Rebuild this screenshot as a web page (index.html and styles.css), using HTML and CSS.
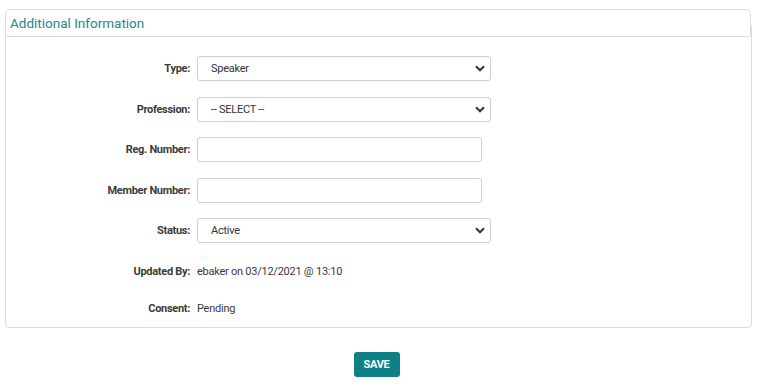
FILE: index.html
```html
<!DOCTYPE html>
<html>
<head>
<meta charset="utf-8">
<link rel="stylesheet" href="styles.css">
</head>
<body>
<div class="panel">
  <div class="panel-head">Additional Information</div>
  <div class="panel-body">
    <form class="form">
      <div class="row">
        <label class="lbl">Type:</label>
        <div class="sel"><span class="val">Speaker</span>
          <svg class="chev" width="10" height="7" viewBox="0 0 10 7"><path d="M1 1.2 L5 5.2 L9 1.2" fill="none" stroke="#3a3a3a" stroke-width="2.2"/></svg></div>
      </div>
      <div class="row">
        <label class="lbl">Profession:</label>
        <div class="sel"><span class="val">-- SELECT --</span>
          <svg class="chev" width="10" height="7" viewBox="0 0 10 7"><path d="M1 1.2 L5 5.2 L9 1.2" fill="none" stroke="#3a3a3a" stroke-width="2.2"/></svg></div>
      </div>
      <div class="row">
        <label class="lbl">Reg. Number:</label>
        <div class="inp"></div>
      </div>
      <div class="row">
        <label class="lbl">Member Number:</label>
        <div class="inp"></div>
      </div>
      <div class="row">
        <label class="lbl">Status:</label>
        <div class="sel"><span class="val">Active</span>
          <svg class="chev" width="10" height="7" viewBox="0 0 10 7"><path d="M1 1.2 L5 5.2 L9 1.2" fill="none" stroke="#3a3a3a" stroke-width="2.2"/></svg></div>
      </div>
      <div class="row static first">
        <label class="lbl">Updated By:</label>
        <span class="txt">ebaker on 03/12/2021 @ 13:10</span>
      </div>
      <div class="row static last">
        <label class="lbl">Consent:</label>
        <span class="txt">Pending</span>
      </div>
    </form>
  </div>
</div>
<div class="actions"><button class="btn" type="button">SAVE</button></div>
</body>
</html>
```
FILE: styles.css
```css
html, body { margin: 0; background: #fff; }
body {
  padding: 9px 6px 0 5px;
  font-family: Roboto, "Liberation Sans", Arial, sans-serif;
  color: #333;
}
.panel { width: 747px; }
.panel-head {
  position: relative;
  z-index: 1;
  width: 740px;
  height: 26px;
  padding: 0 0 0 4px;
  border: 1px solid #dcdcdc;
  border-radius: 5px 5px 0 0;
  background: #fff;
  color: #1b8a90;
  font-size: 13.5px;
  line-height: 26px;
}
.panel-body {
  margin-top: -14px;
  padding: 32px 0 8px;
  border: 1px solid #dcdcdc;
  border-radius: 4px;
  width: 745px;
}
.form { display: flex; flex-direction: column; gap: 15.5px; }
.row {
  display: grid;
  grid-template-columns: 184px 294px;
  column-gap: 7px;
  align-items: center;
  height: 25px;
}
.row.static { height: 22px; }
.row.first { margin-top: 2px; }
.row.last { margin-top: -1px; }
.lbl {
  text-align: right;
  font-weight: 700;
  font-size: 11px;
  letter-spacing: -0.3px;
  color: #3a3a3a;
}
.sel, .inp {
  position: relative;
  box-sizing: border-box;
  height: 25px;
  border: 1px solid #cfcfcf;
  border-radius: 3px;
  background: #fff;
  display: flex;
  align-items: center;
  padding-left: 13px;
  font-size: 11px;
  letter-spacing: -0.25px;
  color: #333;
}
.inp { width: 285px; }
.chev { position: absolute; right: 5px; top: 8px; }
.txt { font-size: 11px; letter-spacing: -0.25px; color: #3a3a3a; }
.actions { width: 748px; display: flex; justify-content: center; padding-top: 24px; }
.btn {
  margin-left: -5px;
  width: 46px;
  height: 25px;
  border: 0;
  border-radius: 3px;
  background: #0f8186;
  color: #fff;
  font-family: Roboto, "Liberation Sans", Arial, sans-serif;
  font-weight: 700;
  font-size: 11px;
  letter-spacing: -0.3px;
  padding: 0;
}
```
